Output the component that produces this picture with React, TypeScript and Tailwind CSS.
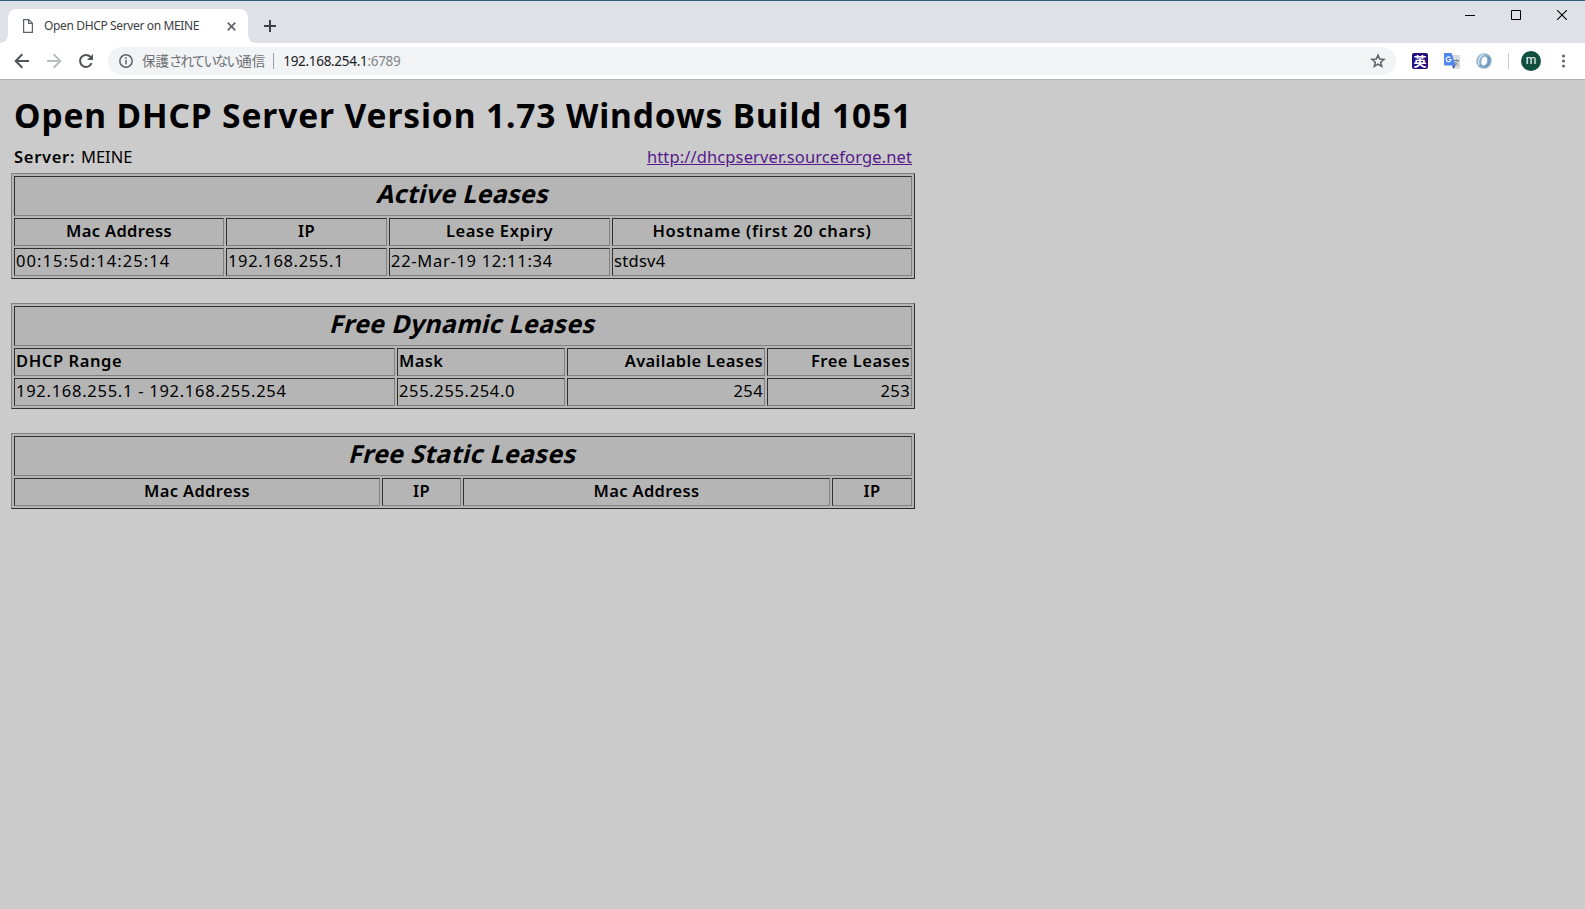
import type { ReactNode } from "react";

const STAR = "M12 3.2l2.5 6 6.5.5-5 4.2 1.6 6.3-5.6-3.4-5.6 3.4L8 13.9 3 9.7l6.5-.5z";

function TitleBar() {
  return (
    <div className="flex h-[43px] items-stretch border-t border-[#2c6077] bg-[#dee1e6]">
      <svg className="mt-auto h-2 w-2" viewBox="0 0 8 8"><path d="M8 0v8H0a8 8 0 0 0 8-8z" fill="#fff" /></svg>
      <div className="mt-2 flex w-60 items-center rounded-t-lg bg-white pl-[15px] pr-[12px]">
        <svg className="h-[14px] w-[10px] shrink-0" viewBox="0 0 10 14" fill="none" stroke="#5f6368" strokeWidth="1.2">
          <path d="M.6.6h5.2l3.6 3.6v9.2H.6zM5.6.6v3.8h3.8" />
        </svg>
        <span className="ml-[11px] grow whitespace-nowrap text-xs tracking-[-0.36px] text-[#3c4043]">Open DHCP Server on MEINE</span>
        <svg className="h-[9px] w-[9px] shrink-0" viewBox="0 0 9 9" stroke="#5f6368" strokeWidth="1.7"><path d="M.7.7l7.6 7.6M8.3.7L.7 8.3" /></svg>
      </div>
      <svg className="mt-auto h-2 w-2" viewBox="0 0 8 8"><path d="M0 0v8h8a8 8 0 0 1-8-8z" fill="#fff" /></svg>
      <svg className="ml-2 mt-[19px] h-3 w-3" viewBox="0 0 12 12" stroke="#3c4043" strokeWidth="2"><path d="M6 0v12M0 6h12" /></svg>
      <div className="ml-auto mr-[18px] mt-[9px] flex gap-9">
        <svg className="h-[10px] w-[10px]" viewBox="0 0 10 10" shapeRendering="crispEdges"><path d="M0 5h10v1H0z" /></svg>
        <svg className="h-[10px] w-[10px]" viewBox="0 0 10 10" fill="none" stroke="#000"><path d="M.5.5h9v9h-9z" /></svg>
        <svg className="h-[10px] w-[10px]" viewBox="0 0 10 10" stroke="#000" strokeWidth="1.1"><path d="M0 0l10 10M10 0L0 10" /></svg>
      </div>
    </div>
  );
}

function Toolbar() {
  return (
    <div className="flex h-[37px] items-center border-b border-[#b1b2b3] bg-white pl-[14px] pr-5">
      <svg className="h-4 w-4" viewBox="0 0 16 16" fill="none" stroke="#505357" strokeWidth="2"><path d="M15 8H2M8.3 1.3L1.7 8l6.6 6.7" /></svg>
      <svg className="ml-4 h-4 w-4" viewBox="0 0 16 16" fill="none" stroke="#babcbe" strokeWidth="2"><path d="M1 8h13M7.7 1.3L14.3 8l-6.6 6.7" /></svg>
      <svg className="ml-4 h-4 w-4" viewBox="0 0 16 16" fill="none" stroke="#505357" strokeWidth="2">
        <path d="M13.6 10.2A6 6 0 1 1 12.4 3.8L14 5.4" /><path d="M15 1v6H9z" fill="#505357" stroke="none" />
      </svg>
      <div className="ml-[14px] flex h-7 grow items-center rounded-full bg-[#f1f3f4] pl-[11px] pr-[10px]">
        <svg className="h-[14px] w-[14px]" viewBox="0 0 14 14" fill="none" stroke="#5f6368" strokeWidth="1.5">
          <circle cx="7" cy="7" r="6.2" /><path d="M7 6v4.3M7 3.3v1.6" />
        </svg>
        <span className="ml-[9px] whitespace-nowrap text-[13.5px] text-[#6a6e73]">
          保護<span className="tracking-[-1.9px]">されていない</span>通信
        </span>
        <div className="ml-2 h-4 w-px bg-[#9aa0a6]" />
        <span className="ml-[9px] text-[13.5px] tracking-[-0.3px] text-[#202124]">
          192.168.254.1<span className="text-[#80868b]">:6789</span>
        </span>
        <svg className="ml-auto h-4 w-4" viewBox="0 0 24 24" fill="none" stroke="#5f6368" strokeWidth="2.3"><path d={STAR} /></svg>
      </div>
      <div className="ml-4 flex h-4 w-4 items-center justify-center rounded-[2px] bg-[#26107e] text-[13px] font-bold leading-none text-white">英</div>
      <svg className="ml-4 h-4 w-4" viewBox="0 0 16 16">
        <path d="M6 2h9.4l.6.8V16H9.5z" fill="#dcdcdc" />
        <path d="M9.7 7.5h5.6M12.4 6.2v1.3M14 7.7c-.4 2-2 3.9-3.6 4.7M11 9c.7 1.6 2 2.9 3.6 3.6" fill="none" stroke="#72868f" strokeWidth="1" />
        <path d="M1 0h6.6l4 12.6H1a1 1 0 0 1-1-1V1a1 1 0 0 1 1-1z" fill="#4f86ec" />
        <path d="M8 12.6h3.6L9.2 16z" fill="#3a50b8" />
        <path d="M6.3 4.6a2.4 2.4 0 1 0 .7 1.9H4.7" fill="none" stroke="#fff" strokeWidth="1.2" />
      </svg>
      <svg className="ml-4 h-4 w-4" viewBox="0 0 16 16">
        <defs>
          <linearGradient id="ring" x1="0" y1="0" x2="1" y2="1">
            <stop offset="0" stopColor="#b4cde2" /><stop offset="0.5" stopColor="#7fa5c8" /><stop offset="1" stopColor="#a9c5dd" />
          </linearGradient>
        </defs>
        <circle cx="8" cy="8" r="7.8" fill="url(#ring)" />
        <path d="M3.2 12C1.5 8 3 3.5 7.5 1.5" fill="none" stroke="#dce8f2" strokeWidth="1.2" />
        <path d="M12.8 4c1.7 4 .2 8.5-4.3 10.5" fill="none" stroke="#5f89b2" strokeWidth="1.2" />
        <ellipse cx="8.2" cy="8" rx="2.7" ry="4.3" transform="rotate(18 8 8)" fill="#fff" />
      </svg>
      <div className="ml-4 h-4 w-px bg-[#c9cbce]" />
      <div className="ml-3 flex h-5 w-5 items-center justify-center rounded-full bg-[#0f4f40] pb-0.5 font-['Roboto'] text-xs leading-none text-white">m</div>
      <svg className="ml-[21px] h-4 w-[3px]" viewBox="0 0 3 16" fill="#5f6368">
        <circle cx="1.5" cy="3" r="1.5" /><circle cx="1.5" cy="8" r="1.5" /><circle cx="1.5" cy="13" r="1.5" />
      </svg>
    </div>
  );
}

function LeaseTable({ title, widths, children }: { title: ReactNode; widths: string[]; children: ReactNode }) {
  return (
    <table className="w-[904px] table-fixed border-separate border-spacing-[2px] border border-[#808080] border-b-[#2f2f2f] border-r-[#2f2f2f] bg-[#b5b5b5]">
      <colgroup>{widths.map((w, i) => <col key={i} className={w} />)}</colgroup>
      <tbody>
        <tr>
          <th colSpan={4} className="h-10 border border-[#2f2f2f] border-b-[#808080] border-r-[#808080] p-0 pb-[5px] pl-[2px] text-center text-[25px] font-bold leading-[33px] tracking-[0.3px]">
            <span className="inline-block -skew-x-[14deg] align-top">{title}</span>
          </th>
        </tr>
        {children}
      </tbody>
    </table>
  );
}

const CELL = "h-7 whitespace-nowrap border border-[#2f2f2f] border-b-[#808080] border-r-[#808080] px-px pt-0 pb-[3px] leading-[23px]";

function Head({ align = "text-center", spacing = "tracking-[0.35px]", children }: { align?: string; spacing?: string; children: ReactNode }) {
  return <th className={`${CELL} font-semibold ${align} ${spacing}`}>{children}</th>;
}

function Cell({ align = "text-left", spacing = "tracking-[0.65px]", children }: { align?: string; spacing?: string; children: ReactNode }) {
  return <td className={`${CELL} ${align} ${spacing}`}>{children}</td>;
}

export default function App() {
  return (
    <div className="flex h-[909px] w-[1585px] flex-col overflow-hidden bg-[#cbcbcb] font-['Noto_Sans','Noto_Sans_CJK_JP',sans-serif] text-black">
      <TitleBar />
      <Toolbar />
      <main className="flex w-[915px] flex-col pl-[11px] pt-[15px] text-[16.5px]">
        <h1 className="whitespace-nowrap pl-[3px] text-[33.5px] font-bold leading-10 tracking-[0.88px]">
          Open DHCP Server Version 1.73 Windows Build 1051
        </h1>
        <div className="mb-1 mt-[10px] flex justify-between pl-[3px] pr-[3px] leading-6">
          <div><b className="mr-[1.5px] font-semibold tracking-[0.7px]">Server:</b> MEINE</div>
          <a className="tracking-[0.12px] text-[#551a8b] underline" href="#">http://dhcpserver.sourceforge.net</a>
        </div>
        <LeaseTable title="Active Leases" widths={["w-[210px]", "w-[161px]", "w-[221px]", "w-[300px]"]}>
          <tr>
            <Head>Mac Address</Head>
            <Head>IP</Head>
            <Head spacing="tracking-[0.6px]">Lease Expiry</Head>
            <Head spacing="tracking-[0.68px]">Hostname (first 20 chars)</Head>
          </tr>
          <tr>
            <Cell spacing="tracking-[1.07px]">00:15:5d:14:25:14</Cell>
            <Cell>192.168.255.1</Cell>
            <Cell spacing="tracking-[0.7px]">22-Mar-19 12:11:34</Cell>
            <Cell spacing="tracking-[0.3px]">stdsv4</Cell>
          </tr>
        </LeaseTable>
        <div className="h-6" />
        <LeaseTable title="Free Dynamic Leases" widths={["w-[381px]", "w-[168px]", "w-[198px]", "w-[145px]"]}>
          <tr>
            <Head align="text-left" spacing="tracking-[0.6px]">DHCP Range</Head>
            <Head align="text-left">Mask</Head>
            <Head align="text-right" spacing="tracking-[0.4px]">Available Leases</Head>
            <Head align="text-right" spacing="tracking-[0.5px]">Free Leases</Head>
          </tr>
          <tr>
            <Cell spacing="tracking-[0.73px]">192.168.255.1 - 192.168.255.254</Cell>
            <Cell>255.255.254.0</Cell>
            <Cell align="text-right" spacing="tracking-[0.4px]">254</Cell>
            <Cell align="text-right" spacing="tracking-[0.4px]">253</Cell>
          </tr>
        </LeaseTable>
        <div className="h-6" />
        <LeaseTable title="Free Static Leases" widths={["w-[366px]", "w-[79px]", "w-[367px]", "w-[80px]"]}>
          <tr>
            <Head>Mac Address</Head>
            <Head>IP</Head>
            <Head>Mac Address</Head>
            <Head>IP</Head>
          </tr>
        </LeaseTable>
      </main>
    </div>
  );
}
